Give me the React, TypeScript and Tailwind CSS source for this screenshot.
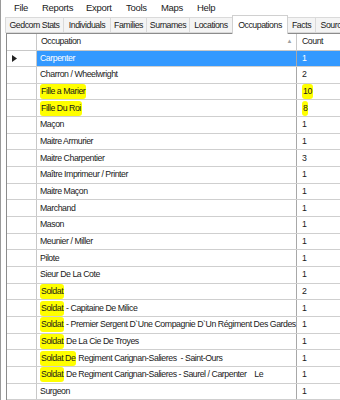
import React from 'react';

type Row = { name: React.ReactNode; count: React.ReactNode; selected?: boolean };

const Mark = ({ children }: { children: React.ReactNode }) => (
    <span className="bg-[#ffff00] rounded-[3px] px-[1px] py-[1px]">{children}</span>
);

const rows: Row[] = [
    { name: 'Carpenter', count: '1', selected: true },
    { name: 'Charron / Wheelwright', count: '2' },
    { name: <Mark>Fille a Marier</Mark>, count: <Mark>10</Mark> },
    { name: <Mark>Fille Du Roi</Mark>, count: <Mark>8</Mark> },
    { name: 'Maçon', count: '1' },
    { name: 'Maitre Armurier', count: '1' },
    { name: 'Maitre Charpentier', count: '3' },
    { name: 'Maître Imprimeur / Printer', count: '1' },
    { name: 'Maitre Maçon', count: '1' },
    { name: 'Marchand', count: '1' },
    { name: 'Mason', count: '1' },
    { name: 'Meunier / Miller', count: '1' },
    { name: 'Pilote', count: '1' },
    { name: 'Sieur De La Cote', count: '1' },
    { name: <Mark>Soldat</Mark>, count: '2' },
    { name: <><Mark>Soldat</Mark> - Capitaine De Milice</>, count: '1' },
    {
        name: <><Mark>Soldat</Mark> - Premier Sergent D`Une Compagnie D`Un Régiment Des Gardes</>,
        count: '1',
    },
    { name: <><Mark>Soldat</Mark> De La Cie De Troyes</>, count: '1' },
    {
        name: <><Mark>Soldat De</Mark> Regiment Carignan-Salieres&nbsp; - Saint-Ours</>,
        count: '1',
    },
    {
        name: <><Mark>Soldat</Mark> De Regiment Carignan-Salieres - Saurel / Carpenter&nbsp;&nbsp;&nbsp; Le</>,
        count: '1',
    },
    { name: 'Surgeon', count: '1' },
];

const menus = [
    { name: 'File', w: 'w-[28px]' },
    { name: 'Reports', w: 'w-[44px]' },
    { name: 'Export', w: 'w-[40px]' },
    { name: 'Tools', w: 'w-[35px]' },
    { name: 'Maps', w: 'w-[36px]' },
    { name: 'Help', w: 'w-[30px]' },
];

const tabs = [
    { name: 'Gedcom Stats', w: 'w-[59px]' },
    { name: 'Individuals', w: 'w-[48px]' },
    { name: 'Families', w: 'w-[37px]' },
    { name: 'Surnames', w: 'w-[44px]' },
    { name: 'Locations', w: 'w-[44px]' },
    { name: 'Occupations', w: 'w-[56px]', active: true },
    { name: 'Facts', w: 'w-[29px]' },
    { name: 'Sources', w: 'w-[40px]' },
];

export default function App() {
    return (
        <div
            className="w-[340px] h-[400px] overflow-hidden bg-white text-[8.75px] tracking-[-0.45px] text-[#1a1a1a] border-l border-[#9a9a9a]"
            style={{ fontFamily: '"Liberation Sans", Arial, sans-serif' }}
        >
            {/* menu bar */}
            <div className="h-[16px] flex items-center pl-[13px] bg-white text-[9.5px] tracking-[-0.3px]">
                {menus.map((m) => (
                    <span key={m.name} className={`${m.w} shrink-0`}>
                        {m.name}
                    </span>
                ))}
            </div>

            {/* tabs */}
            <div className="h-[17px] flex items-end pl-[4px]">
                {tabs.map((t) =>
                    t.active ? (
                        <div
                            key={t.name}
                            className={`${t.w} shrink-0 h-[19px] -mb-[1px] -ml-[1px] flex items-center justify-center pt-[1px] whitespace-nowrap bg-white border border-b-0 border-[#d0d0d0] relative z-10`}
                        >
                            {t.name}
                        </div>
                    ) : (
                        <div
                            key={t.name}
                            className={`${t.w} shrink-0 h-[16px] flex items-center justify-center pt-[1px] whitespace-nowrap overflow-hidden bg-[#f4f4f4] border border-[#dadada] -ml-[1px] first:ml-0`}
                        >
                            {t.name}
                        </div>
                    )
                )}
            </div>

            {/* grid */}
            <div className="ml-[5px] border-l border-t border-[#8c8c8c] bg-white">
                <div className="h-[16.5px] flex border-b border-[#c8c8c8]">
                    <div className="w-[30px] shrink-0 border-r border-[#c8c8c8]" />
                    <div className="w-[260px] shrink-0 flex items-center pl-[4px] pr-[4px] border-r border-[#c8c8c8]">
                        <span className="flex-1">Occupation</span>
                        <span className="text-[6px] text-[#a0a0a0]">▲</span>
                    </div>
                    <div className="flex items-center pl-[5px]">Count</div>
                </div>
                {rows.map((r, i) => (
                    <div key={i} className="h-[16.67px] flex border-b border-[#cfcfcf]">
                        <div className="w-[30px] shrink-0 border-r border-[#c8c8c8] flex items-center pl-[5px]">
                            {r.selected && (
                                <svg width="5" height="7" viewBox="0 0 5 7">
                                    <path d="M0 0 L5 3.5 L0 7 Z" fill="#222" />
                                </svg>
                            )}
                        </div>
                        <div
                            className={`w-[260px] shrink-0 flex items-center pl-[3px] whitespace-pre overflow-hidden border-r border-[#a8a8a8] ${
                                r.selected ? 'bg-[#3399ff] text-white' : ''
                            }`}
                        >
                            {r.name}
                        </div>
                        <div
                            className={`flex-1 flex items-center pl-[5px] ${
                                r.selected ? 'bg-[#3399ff] text-white' : ''
                            }`}
                        >
                            {r.count}
                        </div>
                    </div>
                ))}
            </div>
        </div>
    );
}
